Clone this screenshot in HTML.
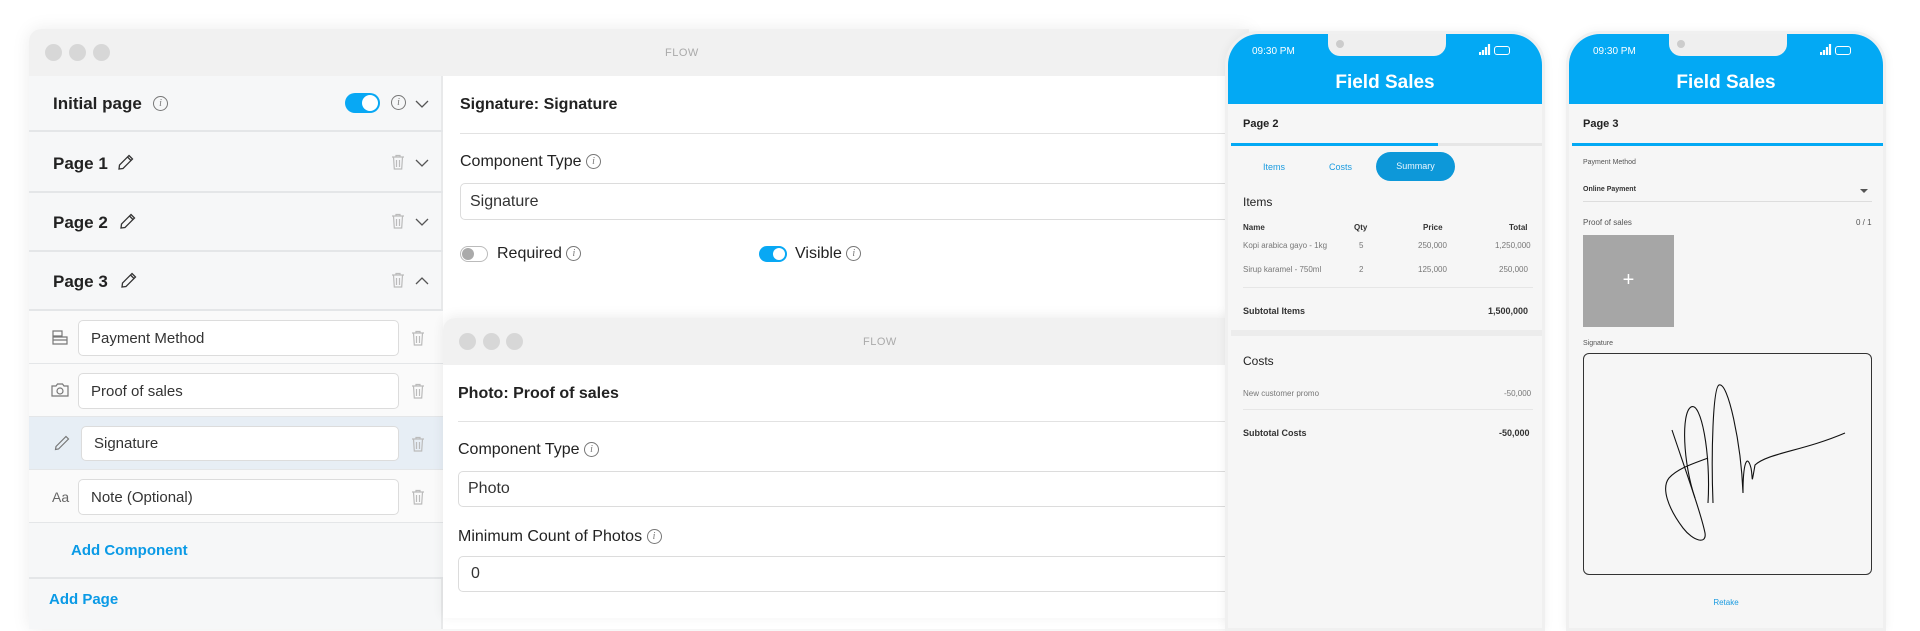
<!DOCTYPE html>
<html><head><meta charset="utf-8"><style>
*{box-sizing:border-box;margin:0;padding:0}
body{width:1920px;height:613px;overflow:hidden;background:#fff;font-family:"Liberation Sans",sans-serif;position:relative;color:#222}
.abs{position:absolute}
.win{position:absolute;left:29px;top:29px;width:1220px;height:600px;background:#fff;border-radius:12px 0 0 0;box-shadow:0 0 18px rgba(0,0,0,.08);overflow:hidden}
.tb{position:absolute;left:0;top:0;right:0;height:47px;background:#f1f1f1}
.dot{position:absolute;width:17px;height:17px;border-radius:50%;background:#d7d7d7}
.flow{position:absolute;font-size:11px;color:#aaa;letter-spacing:.5px}
.left{position:absolute;left:0;top:47px;width:414px;height:560px;background:#f6f7f8;border-right:2px solid #e8e9ea}
.row{position:absolute;left:0;width:414px;border-bottom:2px solid #e4e6e8}
.h{position:absolute;left:24px;font-size:17px;font-weight:bold;color:#222}
.inp{position:absolute;background:#fff;border:1px solid #dcdcdc;border-radius:5px;font-size:15px;color:#333;padding-left:12px;display:flex;align-items:center}
.lbl{position:absolute;font-size:16px;color:#222}
.info{display:inline-block;width:15px;height:15px;border:1.2px solid #777;border-radius:50%;font-size:10px;text-align:center;line-height:13px;color:#777;font-style:italic;font-family:"Liberation Serif",serif;vertical-align:middle}
.blue{color:#0a9ae6;font-weight:bold;font-size:15px;position:absolute}
.phone{position:absolute;top:31px;width:320px;height:600px;background:#f6f6f6;border:3px solid #f0f0f0;border-radius:34px 34px 0 0;overflow:hidden;box-shadow:0 0 10px rgba(0,0,0,.06)}
.ph{position:absolute;left:0;top:0;right:0;height:70px;background:#03a9f4}
.notch{position:absolute;top:0;width:118px;height:22px;background:#efefef;border-radius:0 0 12px 12px}
.ptxt{position:absolute;font-size:9px;color:#333}
svg.i{position:absolute}
</style></head><body>
<svg width="0" height="0" style="position:absolute">
 <defs>
  <symbol id="trash" viewBox="0 0 14 16"><path d="M1 3h12M5 3V1.5h4V3M2.5 3l.8 12h7.4l.8-12M5.5 6v7M8.5 6v7" fill="none" stroke="#bbb" stroke-width="1.2"/></symbol>
  <symbol id="down" viewBox="0 0 14 8"><path d="M1 1l6 6 6-6" fill="none" stroke="#555" stroke-width="1.3"/></symbol>
  <symbol id="up" viewBox="0 0 14 8"><path d="M1 7l6-6 6 6" fill="none" stroke="#555" stroke-width="1.3"/></symbol>
  <symbol id="pen" viewBox="0 0 16 16"><path d="M11 1.5l3.5 3.5L5 14.5 1 15l.5-4z M9.5 3l3.5 3.5" fill="none" stroke="#333" stroke-width="1.3"/></symbol>
 </defs>
</svg>

<div class="win">
 <div class="tb">
  <div class="dot" style="left:16px;top:15px"></div><div class="dot" style="left:40px;top:15px"></div><div class="dot" style="left:64px;top:15px"></div>
  <div class="flow" style="left:636px;top:18px">FLOW</div>
 </div>
 <div class="left">
  <div class="row" style="top:0;height:56px"><div class="h" style="top:18px;font-weight:600">Initial page</div><span class="info abs" style="left:124px;top:20px">i</span>
   <div class="abs" style="left:316px;top:17px;width:35px;height:20px;border-radius:10px;background:#08a8f4"><div class="abs" style="right:2px;top:2px;width:16px;height:16px;border-radius:50%;background:#fff"></div></div>
   <span class="info abs" style="left:362px;top:19px">i</span><svg class="i" style="left:386px;top:24px" width="14" height="8"><use href="#down"/></svg></div>
  <div class="row" style="top:58px;height:59px"><div class="h" style="top:20px">Page 1</div><svg class="i" style="left:89px;top:20px" width="16" height="16"><use href="#pen"/></svg><svg class="i" style="left:362px;top:20px" width="14" height="16"><use href="#trash"/></svg><svg class="i" style="left:386px;top:25px" width="14" height="8"><use href="#down"/></svg></div>
  <div class="row" style="top:117px;height:59px"><div class="h" style="top:20px">Page 2</div><svg class="i" style="left:91px;top:20px" width="16" height="16"><use href="#pen"/></svg><svg class="i" style="left:362px;top:20px" width="14" height="16"><use href="#trash"/></svg><svg class="i" style="left:386px;top:25px" width="14" height="8"><use href="#down"/></svg></div>
  <div class="row" style="top:176px;height:59px"><div class="h" style="top:20px">Page 3</div><svg class="i" style="left:92px;top:20px" width="16" height="16"><use href="#pen"/></svg><svg class="i" style="left:362px;top:20px" width="14" height="16"><use href="#trash"/></svg><svg class="i" style="left:386px;top:25px" width="14" height="8"><use href="#up"/></svg></div>
  <div class="row" style="top:235px;height:53px;background:#fafafa;border-bottom-width:1px"><svg class="i" style="left:23px;top:19px" width="16" height="15" viewBox="0 0 16 15"><path d="M1 1h9v5H1z M1 7h14v7H1z M1 10h14" fill="none" stroke="#777" stroke-width="1.2"/></svg><div class="inp" style="left:49px;top:9px;width:321px;height:36px">Payment Method</div><svg class="i" style="left:382px;top:19px" width="14" height="16"><use href="#trash"/></svg></div>
  <div class="row" style="top:288px;height:53px;background:#fafafa;border-bottom-width:1px"><svg class="i" style="left:22px;top:19px" width="18" height="14" viewBox="0 0 18 14"><path d="M1 3h4l1.5-2h5L13 3h4v10H1z" fill="none" stroke="#777" stroke-width="1.2"/><circle cx="9" cy="8" r="3" fill="none" stroke="#777" stroke-width="1.2"/></svg><div class="inp" style="left:49px;top:9px;width:321px;height:36px">Proof of sales</div><svg class="i" style="left:382px;top:19px" width="14" height="16"><use href="#trash"/></svg></div>
  <div class="row" style="top:341px;height:53px;background:#e7eef5;border-bottom-width:1px"><svg class="i" style="left:25px;top:18px" width="16" height="16" viewBox="0 0 16 16"><path d="M12 1.5l2.5 2.5L4.5 14 1.5 14.5 2 11.5z" fill="none" stroke="#777" stroke-width="1.2"/></svg><div class="inp" style="left:52px;top:9px;width:318px;height:35px">Signature</div><svg class="i" style="left:382px;top:19px" width="14" height="16"><use href="#trash"/></svg></div>
  <div class="row" style="top:394px;height:53px;background:#fafafa;border-bottom-width:1px"><div class="abs" style="left:23px;top:19px;font-size:14px;color:#666">Aa</div><div class="inp" style="left:49px;top:9px;width:321px;height:36px">Note (Optional)</div><svg class="i" style="left:382px;top:19px" width="14" height="16"><use href="#trash"/></svg></div>
  <div class="row" style="top:447px;height:56px;background:#f6f7f8"><div class="blue" style="left:42px;top:19px">Add Component</div></div>
  <div class="blue" style="left:20px;top:515px">Add Page</div>
 </div>
 <div class="abs" style="left:431px;top:47px;width:780px;height:560px">
  <div class="abs" style="left:0;top:20px;font-size:16px;font-weight:bold">Signature: Signature</div>
  <div class="abs" style="left:0;top:57px;width:780px;height:1px;background:#e2e2e2"></div>
  <div class="lbl" style="left:0;top:77px">Component Type <span class="info">i</span></div>
  <div class="inp" style="left:0;top:107px;width:800px;height:37px;padding-left:9px;font-size:16px">Signature</div>
  <div class="abs" style="left:0;top:170px;width:28px;height:16px;border:1.3px solid #bbb;border-radius:8px"><div class="abs" style="left:1px;top:1px;width:12px;height:12px;border-radius:50%;background:#aaa"></div></div>
  <div class="lbl" style="left:37px;top:169px">Required <span class="info">i</span></div>
  <div class="abs" style="left:299px;top:170px;width:28px;height:16px;border-radius:8px;background:#08a8f4"><div class="abs" style="right:2px;top:2px;width:12px;height:12px;border-radius:50%;background:#fff"></div></div>
  <div class="lbl" style="left:335px;top:169px">Visible <span class="info">i</span></div>
 </div>
</div>

<div class="abs" style="left:443px;top:318px;width:790px;height:300px;background:#fff;border-radius:12px 0 0 0;box-shadow:0 -2px 12px rgba(0,0,0,.07);overflow:hidden">
 <div class="tb" style="height:47px"><div class="dot" style="left:16px;top:15px"></div><div class="dot" style="left:40px;top:15px"></div><div class="dot" style="left:63px;top:15px"></div><div class="flow" style="left:420px;top:18px">FLOW</div></div>
 <div class="abs" style="left:15px;top:67px;font-size:16px;font-weight:bold">Photo: Proof of sales</div>
 <div class="abs" style="left:15px;top:103px;width:780px;height:1px;background:#e2e2e2"></div>
 <div class="lbl" style="left:15px;top:123px">Component Type <span class="info">i</span></div>
 <div class="inp" style="left:15px;top:153px;width:800px;height:36px;padding-left:9px;font-size:16px">Photo</div>
 <div class="lbl" style="left:15px;top:210px">Minimum Count of Photos <span class="info">i</span></div>
 <div class="inp" style="left:15px;top:238px;width:800px;height:36px;padding-left:12px;font-size:16px">0</div>
</div>

<div class="phone" style="left:1225px">
 <div class="ph"></div>
 <div class="notch" style="left:100px"><div class="abs" style="left:8px;top:6px;width:8px;height:8px;border-radius:50%;background:#ccc"></div></div>
 <div class="abs" style="left:24px;top:12px;font-size:10px;color:#fff">09:30 PM</div>
 <svg class="i" style="left:251px;top:9px" width="12" height="12" viewBox="0 0 12 12"><path d="M1 12V9M4 12V7M7 12V4M10 12V1" stroke="#fff" stroke-width="2.2"/></svg>
 <div class="abs" style="left:266px;top:12px;width:16px;height:9px;border:1.5px solid #fff;border-radius:3px"></div>
 <div class="abs" style="left:0;width:314px;top:38px;text-align:center;color:#fff;font-size:19px;font-weight:bold">Field Sales</div>
 <div class="abs" style="left:15px;top:84px;font-size:11px;font-weight:bold">Page 2</div>
 <div class="abs" style="left:3px;top:109px;width:311px;height:3px;background:#e6e6e6"></div>
 <div class="abs" style="left:3px;top:109px;width:207px;height:3px;background:#03a9f4"></div>
 <div class="abs" style="left:35px;top:128px;font-size:9px;color:#1a9be0">Items</div>
 <div class="abs" style="left:101px;top:128px;font-size:9px;color:#1a9be0">Costs</div>
 <div class="abs" style="left:148px;top:118px;width:79px;height:29px;border-radius:15px;background:#0d98d9;color:#e8f6ff;font-size:9px;text-align:center;line-height:29px">Summary</div>
 <div class="abs" style="left:15px;top:161px;font-size:12px">Items</div>
 <div class="ptxt" style="left:15px;top:189px;font-weight:bold;font-size:8px">Name</div><div class="ptxt" style="left:126px;top:189px;font-weight:bold;font-size:8px">Qty</div><div class="ptxt" style="left:195px;top:189px;font-weight:bold;font-size:8px">Price</div><div class="ptxt" style="left:281px;top:189px;font-weight:bold;font-size:8px">Total</div>
 <div class="ptxt" style="left:15px;top:207px;color:#777;font-size:8px">Kopi arabica gayo - 1kg</div><div class="ptxt" style="left:131px;top:207px;color:#777;font-size:8px">5</div><div class="ptxt" style="left:190px;top:207px;color:#777;font-size:8px">250,000</div><div class="ptxt" style="left:267px;top:207px;color:#777;font-size:8px">1,250,000</div>
 <div class="ptxt" style="left:15px;top:231px;color:#777;font-size:8px">Sirup karamel - 750ml</div><div class="ptxt" style="left:131px;top:231px;color:#777;font-size:8px">2</div><div class="ptxt" style="left:190px;top:231px;color:#777;font-size:8px">125,000</div><div class="ptxt" style="left:271px;top:231px;color:#777;font-size:8px">250,000</div>
 <div class="abs" style="left:15px;top:253px;width:290px;height:1px;background:#e6e6e6"></div>
 <div class="ptxt" style="left:15px;top:272px;font-weight:bold">Subtotal Items</div><div class="ptxt" style="left:260px;top:272px;font-weight:bold">1,500,000</div>
 <div class="abs" style="left:3px;top:296px;width:311px;height:6px;background:#ececec"></div>
 <div class="abs" style="left:15px;top:320px;font-size:12px">Costs</div>
 <div class="ptxt" style="left:15px;top:355px;color:#777;font-size:8px">New customer promo</div><div class="ptxt" style="left:276px;top:355px;color:#777;font-size:8px">-50,000</div>
 <div class="abs" style="left:15px;top:375px;width:290px;height:1px;background:#e6e6e6"></div>
 <div class="ptxt" style="left:15px;top:394px;font-weight:bold">Subtotal Costs</div><div class="ptxt" style="left:271px;top:394px;font-weight:bold">-50,000</div>
</div>

<div class="phone" style="left:1566px">
 <div class="ph"></div>
 <div class="notch" style="left:100px"><div class="abs" style="left:8px;top:6px;width:8px;height:8px;border-radius:50%;background:#ccc"></div></div>
 <div class="abs" style="left:24px;top:12px;font-size:10px;color:#fff">09:30 PM</div>
 <svg class="i" style="left:251px;top:9px" width="12" height="12" viewBox="0 0 12 12"><path d="M1 12V9M4 12V7M7 12V4M10 12V1" stroke="#fff" stroke-width="2.2"/></svg>
 <div class="abs" style="left:266px;top:12px;width:16px;height:9px;border:1.5px solid #fff;border-radius:3px"></div>
 <div class="abs" style="left:0;width:314px;top:38px;text-align:center;color:#fff;font-size:19px;font-weight:bold">Field Sales</div>
 <div class="abs" style="left:14px;top:84px;font-size:11px;font-weight:bold">Page 3</div>
 <div class="abs" style="left:3px;top:109px;width:311px;height:3px;background:#03a9f4"></div>
 <div class="ptxt" style="left:14px;top:125px;font-size:7px;color:#555">Payment Method</div>
 <div class="ptxt" style="left:14px;top:152px;font-size:7px;font-weight:bold">Online Payment</div>
 <div class="abs" style="left:291px;top:155px;border:4px solid transparent;border-top:4px solid #555"></div>
 <div class="abs" style="left:14px;top:167px;width:289px;height:1px;background:#ddd"></div>
 <div class="ptxt" style="left:14px;top:184px;font-size:8px;color:#555">Proof of sales</div><div class="ptxt" style="left:287px;top:184px;font-size:8px;color:#555">0 / 1</div>
 <div class="abs" style="left:14px;top:201px;width:91px;height:92px;background:#a6a6a6;color:#fff;font-size:20px;text-align:center;line-height:90px">+</div>
 <div class="ptxt" style="left:14px;top:306px;font-size:7px;color:#555">Signature</div>
 <div class="abs" style="left:14px;top:319px;width:289px;height:222px;border:1.5px solid #333;border-radius:6px">
  <svg width="289" height="222" style="position:absolute;left:-1px;top:-1px" fill="none" stroke="#111" stroke-width="1.1">
   <path d="M89 77 C100 110 118 160 122 180 C124 192 110 188 100 175 C85 155 78 135 86 125 C95 115 112 110 125 105"/>
   <path d="M112 145 C100 110 98 60 108 54 C118 48 128 100 125 150"/>
   <path d="M130 150 C128 100 130 35 136 32 C145 28 158 90 160 140 C160 110 164 100 168 115 C170 125 168 135 172 112 C185 100 220 98 262 80"/>
  </svg>
 </div>
 <div class="abs" style="left:0;width:314px;top:564px;text-align:center;font-size:8px;color:#1a9be0">Retake</div>
</div>
</body></html>
